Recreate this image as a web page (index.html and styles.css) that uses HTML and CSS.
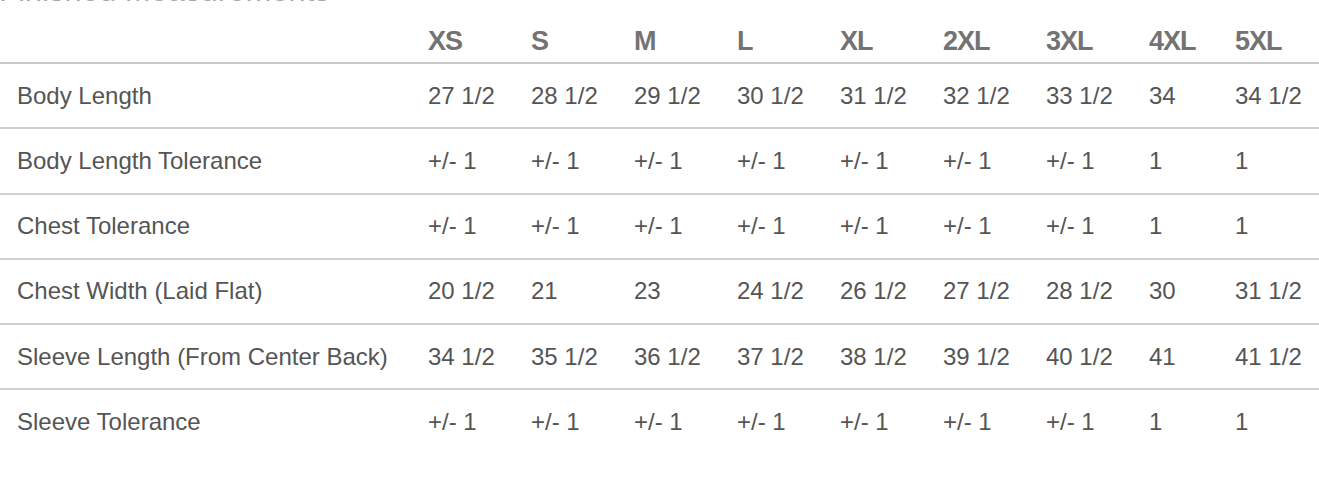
FILE: index.html
```html
<!DOCTYPE html>
<html lang="en">
<head>
<meta charset="utf-8">
<title>Finished Measurements</title>
<link rel="stylesheet" href="styles.css">
</head>
<body>
<div class="sizing">
  <h2 class="sizing-title">Finished Measurements</h2>
  <table class="size-table">
    <colgroup>
      <col class="col-label">
      <col class="col-size"><col class="col-size"><col class="col-size"><col class="col-size">
      <col class="col-size"><col class="col-size"><col class="col-size">
      <col class="col-narrow"><col class="col-last">
    </colgroup>
    <thead>
      <tr>
        <th></th><th>XS</th><th>S</th><th>M</th><th>L</th><th>XL</th><th>2XL</th><th>3XL</th><th>4XL</th><th>5XL</th>
      </tr>
    </thead>
    <tbody>
      <tr><td>Body Length</td><td>27 1/2</td><td>28 1/2</td><td>29 1/2</td><td>30 1/2</td><td>31 1/2</td><td>32 1/2</td><td>33 1/2</td><td>34</td><td>34 1/2</td></tr>
      <tr><td>Body Length Tolerance</td><td>+/- 1</td><td>+/- 1</td><td>+/- 1</td><td>+/- 1</td><td>+/- 1</td><td>+/- 1</td><td>+/- 1</td><td>1</td><td>1</td></tr>
      <tr><td>Chest Tolerance</td><td>+/- 1</td><td>+/- 1</td><td>+/- 1</td><td>+/- 1</td><td>+/- 1</td><td>+/- 1</td><td>+/- 1</td><td>1</td><td>1</td></tr>
      <tr><td>Chest Width (Laid Flat)</td><td>20 1/2</td><td>21</td><td>23</td><td>24 1/2</td><td>26 1/2</td><td>27 1/2</td><td>28 1/2</td><td>30</td><td>31 1/2</td></tr>
      <tr><td>Sleeve Length (From Center Back)</td><td>34 1/2</td><td>35 1/2</td><td>36 1/2</td><td>37 1/2</td><td>38 1/2</td><td>39 1/2</td><td>40 1/2</td><td>41</td><td>41 1/2</td></tr>
      <tr><td>Sleeve Tolerance</td><td>+/- 1</td><td>+/- 1</td><td>+/- 1</td><td>+/- 1</td><td>+/- 1</td><td>+/- 1</td><td>+/- 1</td><td>1</td><td>1</td></tr>
    </tbody>
  </table>
</div>
</body>
</html>
```

FILE: styles.css
```css
html, body {
  margin: 0;
  padding: 0;
  background: #ffffff;
}

body {
  font-family: "Liberation Sans", Arial, Helvetica, sans-serif;
  color: #555555;
  overflow: hidden;
}

.sizing {
  width: 1319px;
}

.sizing-title {
  margin: -27px 0 11px -1px;
  font-size: 31px;
  line-height: 36px;
  font-weight: normal;
  color: #a8a8a8;
}

.size-table {
  width: 1319px;
  border-collapse: collapse;
  table-layout: fixed;
}

.col-label { width: 411px; }
.col-size { width: 103px; }
.col-narrow { width: 86px; }
.col-last { width: 101px; }

.size-table th,
.size-table td {
  text-align: left;
  white-space: nowrap;
  font-size: 24px;
  line-height: 24px;
  padding: 19.65px 0 19.65px 17px;
}

.size-table th {
  font-size: 27px;
  font-weight: bold;
  color: #737373;
  letter-spacing: -1px;
  padding-top: 9px;
  padding-bottom: 9px;
}

.size-table thead tr {
  border-bottom: 2px solid #c9c9c9;
}

.size-table tbody tr {
  border-bottom: 2px solid #cfcfcf;
}

.size-table tbody tr:last-child {
  border-bottom: none;
}

.size-table td {
  color: #555555;
}
```
